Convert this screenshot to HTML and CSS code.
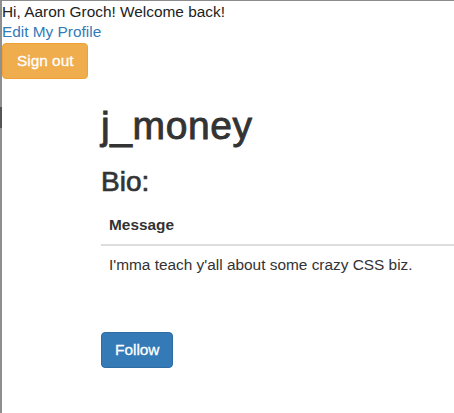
FILE: index.html
```html
<!DOCTYPE html>
<html lang="en">
<head>
    <meta charset="UTF-8">
    <meta name="viewport" content="width=device-width, initial-scale=1.0">
    <title>j_money</title>
    <link rel="stylesheet" href="styles.css">
</head>
<body>
    <div class="frame">
        <div class="greeting">Hi, Aaron Groch! Welcome back!</div>
        <a class="profile-link" href="#">Edit My Profile</a>
        <div class="signout">
            <button class="btn btn-warning">Sign out</button>
        </div>

        <div class="container">
            <h1>j_money</h1>
            <h2>Bio:</h2>
            <table class="table">
                <thead>
                    <tr><th>Message</th></tr>
                </thead>
                <tbody>
                    <tr><td>I'mma teach y'all about some crazy CSS biz.</td></tr>
                </tbody>
            </table>
            <button class="btn btn-primary">Follow</button>
        </div>
    </div>
</body>
</html>
```

FILE: styles.css
```css
html, body {
    margin: 0;
    height: 100%;
    overflow: hidden;
}
body {
    font-family: "Liberation Sans", Arial, sans-serif;
    font-size: 15.4px;
    line-height: 20px;
    color: #333;
    background: #fff;
}
.frame {
    position: relative;
    height: 100%;
    box-sizing: border-box;
    padding-top: 1px;
    border-top: 1px solid #8c8c8c;
    border-left: 2px solid #8f8f8f;
}
/* darker notch on the window edge */
.frame::before {
    content: "";
    position: absolute;
    left: -2px;
    top: 106px;
    width: 2px;
    height: 21px;
    background: #555;
}
.greeting {
    color: #222;
}
.profile-link {
    display: block;
    color: #337ab7;
    text-decoration: none;
}
.signout {
    margin-top: 1px;
}
.btn {
    display: inline-block;
    padding: 7px 14px;
    font-family: inherit;
    font-size: 15.4px;
    line-height: 20px;
    border: 1px solid transparent;
    border-radius: 4px;
    -webkit-text-stroke: 0.3px #fff;
    cursor: pointer;
}
.btn-warning {
    background-color: #f0ad4e;
    border-color: #eea236;
    color: #fff;
}
.btn-primary {
    padding: 7px 13px;
    background-color: #337ab7;
    border-color: #2e6da4;
    color: #fff;
}
.container {
    padding-left: 99px;
}
h1 {
    font-size: 39px;
    font-weight: normal;
    line-height: 43px;
    letter-spacing: 0.6px;
    -webkit-text-stroke: 0.9px #333;
    margin: 25px 0 0;
}
h2 {
    font-size: 28px;
    font-weight: normal;
    line-height: 31px;
    -webkit-text-stroke: 0.7px #333;
    margin: 19px 0 9px;
}
.table {
    width: 100%;
    border-collapse: collapse;
    margin-bottom: 48px;
}
.table th,
.table td {
    padding: 8px;
    line-height: 22px;
    text-align: left;
}
.table th {
    border-bottom: 2px solid #ddd;
}
```
